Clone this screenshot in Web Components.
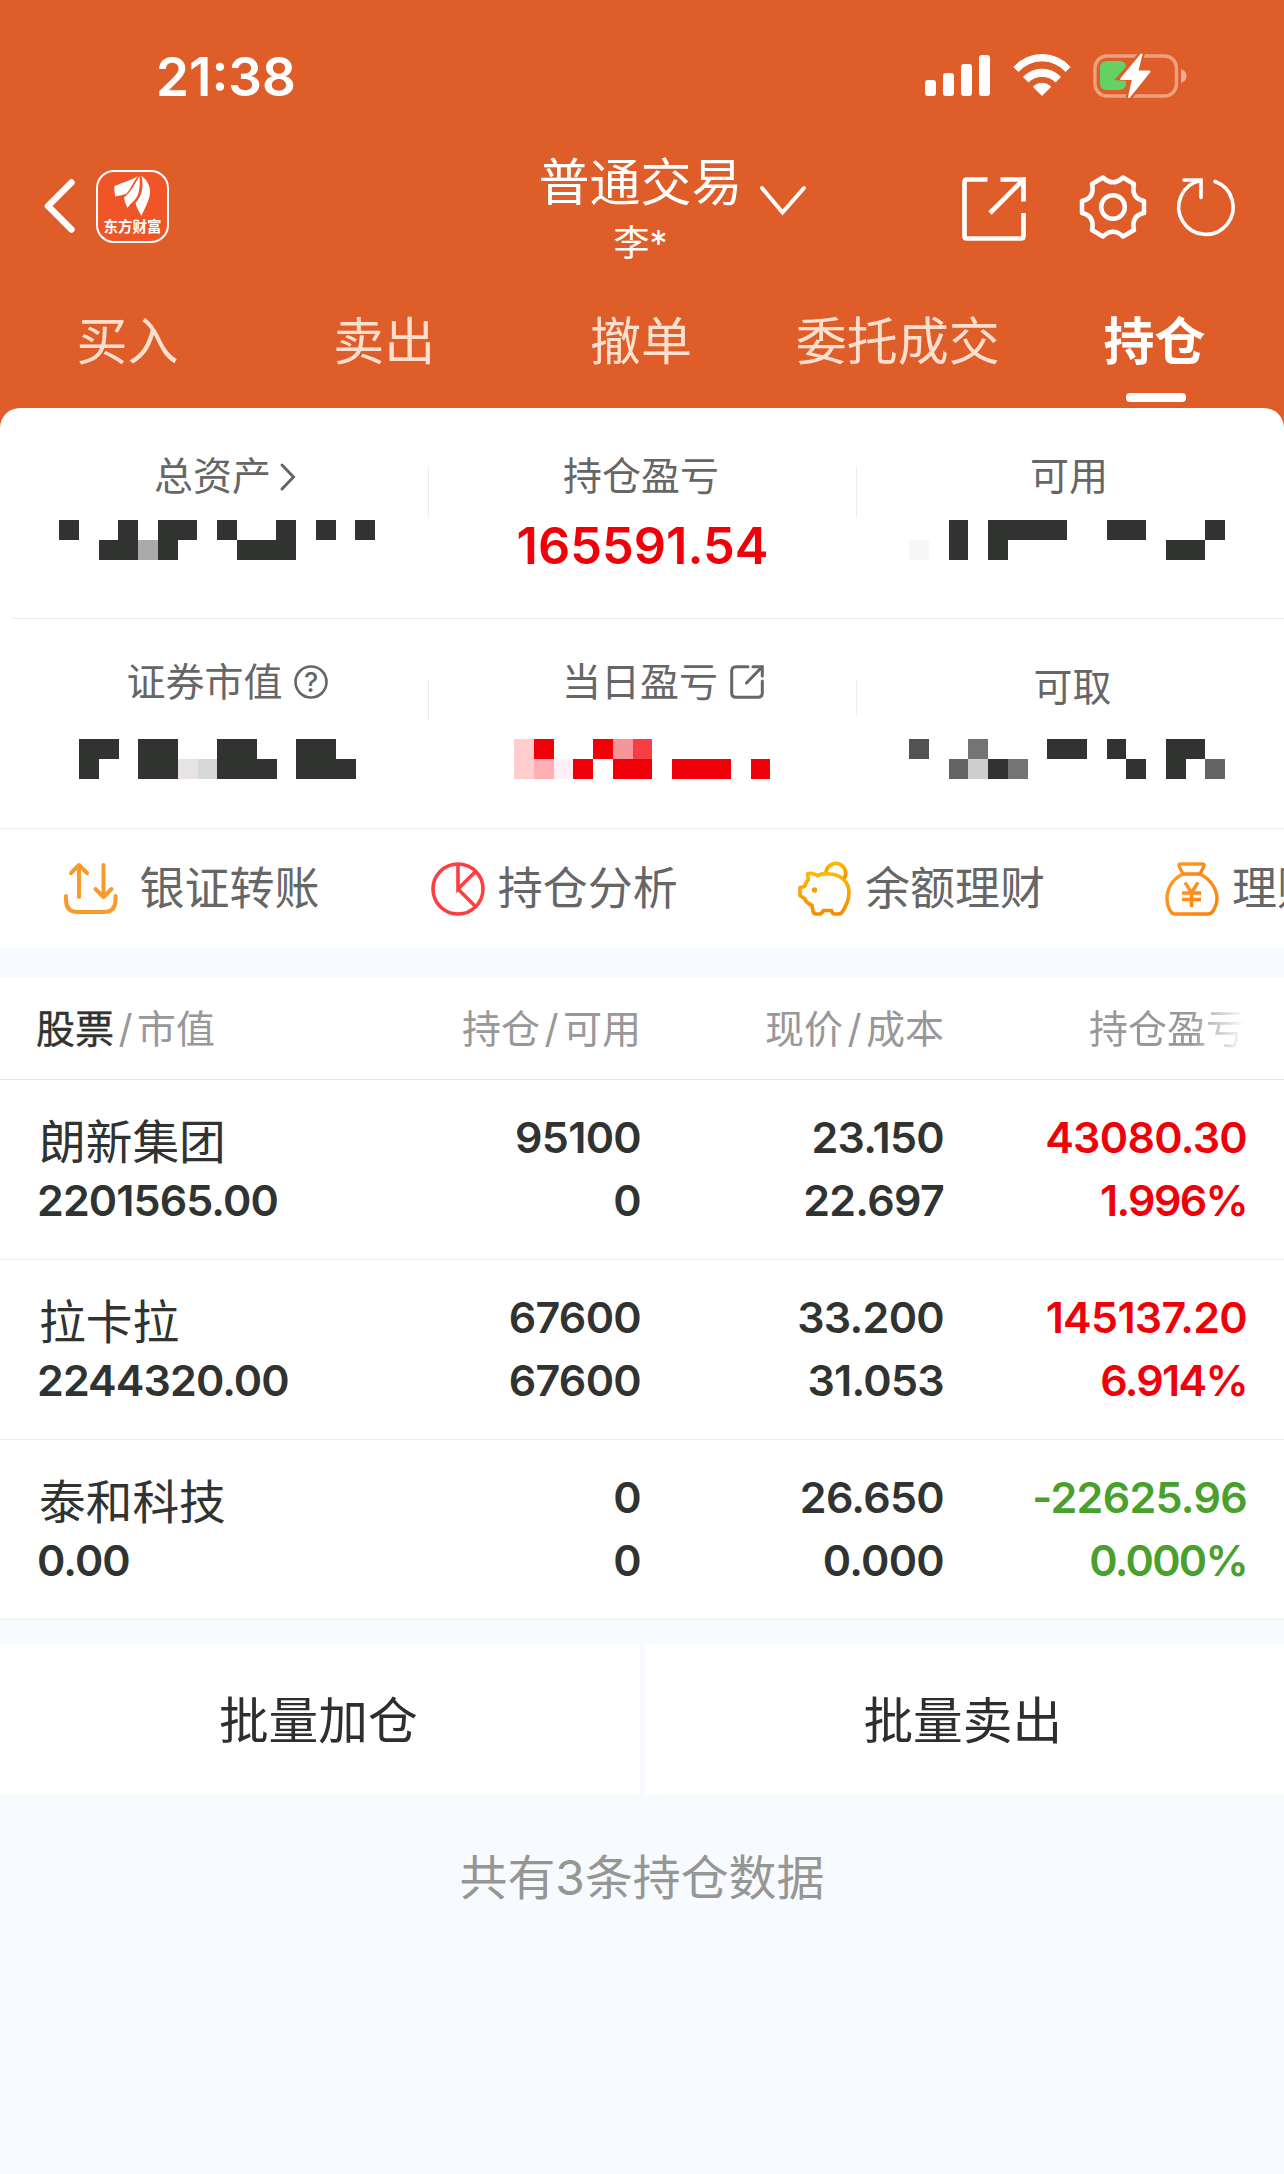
<!DOCTYPE html>
<html lang="zh-CN">
<head>
<meta charset="utf-8">
<title>持仓</title>
<style>
  html, body { margin: 0; padding: 0; }
  body {
    width: 1284px;
    min-height: 2174px;
    overflow-x: hidden;
    background: #f7faff;
    color: #313330;
    font-family: Inter, "Noto Sans CJK SC", sans-serif;
  }
</style>
</head>
<body>
<trade-page></trade-page>

<script>
(function (window) {

  const ICONS = {
    signal: [65, 41, `<g fill="#fff"><rect y="25" width="11" height="16" rx="3"/><rect x="18" y="18" width="11" height="23" rx="3"/><rect x="36" y="9" width="11" height="32" rx="3"/><rect x="54" width="11" height="41" rx="3"/></g>`],
    wifi: [58, 43, `<g fill="#fff" stroke="#fff" stroke-linejoin="round"><path d="M.8 13A38 38 0 0 1 57.2 13L52.5 17.6A31 31 0 0 0 5.5 17.6Z"/><path d="M10.5 22.9A26 26 0 0 1 47.5 22.9L42.5 28A19 19 0 0 0 15.5 28Z"/><path d="M20.3 32.8A12.5 12.5 0 0 1 37.7 32.8L29 41.4Z"/></g>`],
    battery: [94, 46, `<rect x="2" y="3" width="81.5" height="40" rx="12" fill="none" stroke="#fff" stroke-opacity=".42" stroke-width="3.4"/><path d="M88 16q5.5 2 5.5 7t-5.5 7z" fill="#fff" fill-opacity=".5"/><rect x="7" y="8" width="26" height="29" rx="6" fill="#64d165"/><path d="M48.8.7L44.7 18 57 19.5 35.7 44.7 39.8 25.5 27.5 24.5Z" fill="#df5d29" stroke="#df5d29" stroke-width="6"/><path d="M48.5 1.5L44.2 18.5H56.5L36 44 40 26H28.2Z" fill="#fff" stroke="#fff" stroke-width="2" stroke-linejoin="round"/>`],
    back: [32, 54, `<path d="M27.5 3.5L4 27 27.5 50.5" fill="none" stroke="#fff" stroke-width="6.5" stroke-linecap="round" stroke-linejoin="round"/>`],
    leaves: [40, 42, `<g fill="#fff"><path d="M25 1C17 6 8 8 1.500 11C1 15 1.500 18 2.500 21.500C7 20 10 20.500 13.500 18.500C18 14 20 7 25 1Z"/><path d="M26.500 1C22 8 19 16 11 22.500C11.500 26 12.500 29 14.500 33C18 27 23 26 25.500 18C27 12 27 6 26.500 1Z"/><path d="M28.500 1C30.500 11 30 20 22.500 28C23.500 32 26 37 28.500 41C31 34 37 25 37 17C37 9 33 4 28.500 1Z"/></g>`],
    down: [46, 30, `<path d="M2 2L22.500 26.500 44 2" fill="none" stroke="#fff" stroke-width="4" stroke-linecap="round"/>`],
    share: [64, 64, `<path d="M25.500 2.500H5Q2.500 2.500 2.500 5V59Q2.500 61.500 5 61.500H59Q61.500 61.500 61.500 59V36M38.500 2.500H61.500V24.500M61 3L28 36" fill="none" stroke="#fff" stroke-width="4.700"/>`],
    gear: [66, 64, `<path d="M23 2.500Q33 12 43 2.500L54 9C52 18 55 24 64 26V38C55 40 52 46 54 55L43 61.500Q33 52 23 61.500L12 55C14 46 11 40 2 38V26C11 24 14 18 12 9Z" fill="none" stroke="#fff" stroke-width="4.500" stroke-linejoin="round"/><circle cx="33" cy="32" r="11.800" fill="none" stroke="#fff" stroke-width="4.500"/>`],
    refresh: [58, 60, `<path d="M35 4.500A27.200 27.200 0 1 1 20.500 3.500M4 3H21V20.500" fill="none" stroke="#fff" stroke-width="3.600" stroke-linecap="round"/>`],
    more: [16, 28, `<path d="M2 2L13.500 14 2 26" fill="none" stroke="#666" stroke-width="3" stroke-linecap="round"/>`],
    help: [34, 34, `<circle cx="17" cy="17" r="15.500" fill="none" stroke="#666" stroke-width="2.600"/><text x="17" y="26.500" text-anchor="middle" font-family="Inter, sans-serif" font-size="27" font-weight="500" fill="#666">?</text>`],
    link: [34, 34, `<path d="M18 1.700H6Q1.700 1.700 1.700 6V28Q1.700 32.300 6 32.300H28Q32.300 32.300 32.300 28V16M23 1.700H32.300V11M32 2L16.500 18" fill="none" stroke="#666" stroke-width="3" stroke-linecap="round"/>`],
    transfer: [55, 54, `<path d="M16 35V3M8 11L16 3 24 11M40.500 3V35M32.500 27L40.500 35 48.500 27M3 34V38Q3 50 15 50H40.500Q52.500 50 52.500 38V34" fill="none" stroke="#f99b2b" stroke-width="4" stroke-linecap="round" stroke-linejoin="round"/>`],
    pie: [54, 54, `<g fill="none" stroke="#ff3e42" stroke-width="3.600"><circle cx="27" cy="27" r="25"/><path d="M27 2V27L44.500 9.500M27 27L44.500 44.500"/></g>`],
    pig: [54, 54, `<defs><linearGradient id="g" x1="0" y1="0" x2="0" y2="1"><stop stop-color="#ffb800"/><stop offset="1" stop-color="#f98b00"/></linearGradient></defs><g fill="none" stroke="url(#g)" stroke-width="3.700" stroke-linejoin="round" stroke-linecap="round"><path d="M28 11.500A9.800 9.800 0 1 1 46 16.500"/><path d="M9.500 12Q14 10 19.500 13.500Q25 11 32 12C43 12.500 51 20 51 30.500C51 40 47 46 43.500 51Q42.500 52 40 52H36.500Q34.500 52 33.500 48.500H25.500Q23.500 52 21.500 52H18.500Q15.500 52 15 49L14 43.500Q8 40.500 6.500 36.500L2 33.500V25.500L6.500 24.500Q8 19.500 10.500 17.500Z"/></g><circle cx="16.500" cy="28" r="2.700" fill="#f99a00"/>`],
    bag: [54, 54, `<defs><linearGradient id="g" x1="0" y1="0" x2="1" y2="1"><stop stop-color="#ff9a2c"/><stop offset="1" stop-color="#ff7f0a"/></linearGradient></defs><g fill="none" stroke="url(#g)" stroke-width="3.400" stroke-linejoin="round"><path d="M18 12L14 4Q13.500 2 15.500 2H37.500Q39.500 2 39 4L35 12Z"/><path d="M18 12C7 17 2 27 2 36.500C2 43 3.500 46 5.500 49Q7 52 10 52H43Q46 52 48 49C50.500 45 52 42 52 36C51.500 26 45 17 35 12"/><path d="M20 20.500L26.500 30.500 33 20.500M26.500 30.500V45M17 31H36M17 37.500H36"/></g>`]
  };

  // Every component gets an open root filled from its own template
  function define(name, css, html) {
    const template = document.createElement('template');
    template.innerHTML = `<style>:host { display: block; box-sizing: border-box; } * { box-sizing: border-box; } ${css}</style>${html}`;
    window.customElements.define(name, class extends HTMLElement {
      connectedCallback() {
        if (this.shadowRoot) { return; }
        this.attachShadow({ mode: 'open' });
        this.shadowRoot.appendChild(document.importNode(template.content, true));
      }
    });
  }

  window.customElements.define('trade-icon', class TradeIcon extends HTMLElement {
    connectedCallback() {
      if (this.shadowRoot) { return; }
      const [w, h, body] = ICONS[this.getAttribute('name')];
      this.attachShadow({ mode: 'open' });
      this.shadowRoot.innerHTML = `
        <style>
          :host { display: block; flex: none; width: ${w}px; height: ${h}px; }
          svg { display: block; overflow: visible; }
        </style>
        <svg width="${w}" height="${h}" viewBox="0 0 ${w} ${h}">${body}</svg>`;
    }
  });

  // Hides an amount behind blocks: one letter per block, "." is empty
  const SHADES = {
    '#': '#313330', a: '#aba9ac', b: '#f7f7f7', c: '#e6e2e6', d: '#d6d7d7', e: '#525252', f: '#636562',
    g: '#737572', h: '#cecece', R: '#f00008', s: '#ffcdcd', t: '#ffb0b4', u: '#fff0f5', v: '#f8959b', w: '#f93d44'
  };

  window.customElements.define('masked-amount', class MaskedAmount extends HTMLElement {
    connectedCallback() {
      if (this.shadowRoot) { return; }
      const rows = this.getAttribute('rows').split('|');
      const cells = rows.map((row, y) => [...row].map((c, x) => c === '.' ? '' :
        `<rect x="${x}" y="${y}" width="1" height="1" fill="${SHADES[c]}"/>`).join('')).join('');
      const cols = rows[0].length;
      const width = cols * 1284 / 65;
      this.attachShadow({ mode: 'open' });
      this.shadowRoot.innerHTML = `
        <style>
          :host { display: block; width: ${width}px; height: 40px; }
          svg { display: block; }
        </style>
        <svg width="${width}" height="40" viewBox="0 0 ${cols} 2" preserveAspectRatio="none" shape-rendering="crispEdges">${cells}</svg>`;
    }
  });

  define('status-bar', `
    :host { display: flex; align-items: flex-start; height: 150px; padding: 53px 97px 0 156px; }
    .time { font-size: 53px; line-height: 48px; font-weight: 600; margin-right: auto; }
    trade-icon { margin-top: 1px; }
    .signal { margin: 2px 23px 0 0; }
    .battery { margin: 0 0 0 22px; }
  `, `
    <span class="time">21:38</span>
    <trade-icon class="signal" name="signal"></trade-icon>
    <trade-icon name="wifi"></trade-icon>
    <trade-icon class="battery" name="battery"></trade-icon>
  `);

  define('nav-header', `
    :host { display: grid; grid-template-columns: 1fr auto 1fr; height: 137px; padding: 0 47px 0 44px; }
    .left { display: flex; align-items: flex-start; padding-top: 20px; gap: 20px; }
    .back { margin-top: 9px; }
    .logo { width: 73px; height: 73px; border: 2px solid #fff; border-radius: 18px; background: #ef5527; display: flex; flex-direction: column; align-items: center; padding-top: 3px; }
    .logo span { font-size: 14.500px; line-height: 18px; font-weight: 700; margin-top: 1px; white-space: nowrap; }
    .title { text-align: center; }
    .name { display: grid; grid-template-columns: 64px auto 64px; font-size: 51px; line-height: 66px; white-space: nowrap; }
    .name span { grid-column: 2; }
    .name trade-icon { margin: 36px 0 0 17px; }
    .user { font-size: 36px; line-height: 46px; margin-top: 4px; }
    .right { display: flex; justify-content: flex-end; align-items: flex-start; padding-top: 27px; }
    .gear { margin: -2px 34px 0 54px; }
  `, `
    <div class="left">
      <trade-icon class="back" name="back"></trade-icon>
      <div class="logo"><trade-icon name="leaves"></trade-icon><span>东方财富</span></div>
    </div>
    <div class="title">
      <div class="name"><span>普通交易</span><trade-icon name="down"></trade-icon></div>
      <div class="user">李*</div>
    </div>
    <div class="right">
      <trade-icon name="share"></trade-icon>
      <trade-icon class="gear" name="gear"></trade-icon>
      <trade-icon name="refresh" style="margin-right: -1px"></trade-icon>
    </div>
  `);

  define('nav-tab', `
    :host { flex: 1; display: flex; flex-direction: column; align-items: center; font-size: 51px; line-height: 60px; color: #fadfcf; white-space: nowrap; }
    slot { display: block; margin-left: -2px; }
    :host([active]) { color: #fff; font-weight: 600; }
    :host([active])::after { content: ""; width: 60px; height: 9px; margin-top: 21px; border-radius: 4px; background: #fff; }
  `, `<slot></slot>`);

  define('nav-tabs', `:host { display: flex; height: 121px; padding-top: 25px; }`, `
    <nav-tab>买入</nav-tab><nav-tab>卖出</nav-tab><nav-tab>撤单</nav-tab><nav-tab>委托成交</nav-tab><nav-tab active>持仓</nav-tab>
  `);

  define('summary-cell', `
    :host { display: flex; flex-direction: column; padding-top: var(--top, 45px); }
    .label { display: flex; align-items: center; justify-content: center; height: 46px; margin-left: var(--shift, -2px); font-size: 39px; line-height: 46px; color: #666; white-space: nowrap; }
    .value { margin-top: var(--gap, 21px); }
  `, `
    <div class="label"><slot name="label"></slot></div>
    <div class="value"><slot></slot></div>
  `);

  define('account-summary', `
    :host { background: #fff; border-radius: 20px 20px 0 0; }
    .row { display: grid; grid-template-columns: repeat(3, 1fr); height: 210px; }
    .rule { height: 1px; margin-left: 12px; background: #ebebeb; }
    .day { height: 209px; --bar: 42px; }
    .day + .rule { margin-left: 0; }
    summary-cell + summary-cell { background: linear-gradient(#ebebeb, #ebebeb) no-repeat 0 60px / 1px var(--bar, 48px); }
    .profit { text-align: center; font-size: 50.500px; line-height: 50px; font-weight: 600; color: #f00008; margin-top: 1px; padding-left: 1px; }
  `, `
    <div class="row">
      <summary-cell style="--shift: 22px">
        <span slot="label">总资产</span><trade-icon slot="label" name="more" style="margin: 2px 0 0 9px"></trade-icon>
        <masked-amount style="margin-left: 59.300px" rows="#..#.##.#..#.#.#|..##a#...###...."></masked-amount>
      </summary-cell>
      <summary-cell>
        <span slot="label">持仓盈亏</span>
        <div class="profit">165591.54</div>
      </summary-cell>
      <summary-cell>
        <span slot="label">可用</span>
        <masked-amount style="margin-left: 52.700px" rows="..#.####..##...#|b.#.#........##."></masked-amount>
      </summary-cell>
    </div>
    <div class="rule"></div>
    <div class="row day">
      <summary-cell style="--top: 40px; --shift: 26px; --gap: 34px">
        <span slot="label">证券市值</span><trade-icon slot="label" name="help" style="margin-left: 11px"></trade-icon>
        <masked-amount style="margin-left: 79px" rows="##.##..##..##.|#..##cd###.###"></masked-amount>
      </summary-cell>
      <summary-cell style="--top: 40px; --shift: 42px; --gap: 34px">
        <span slot="label">当日盈亏</span><trade-icon slot="label" name="link" style="margin-left: 12px"></trade-icon>
        <masked-amount style="margin-left: 85.600px" rows="sR..Rvw......|stuR.RR.RRR.R"></masked-amount>
      </summary-cell>
      <summary-cell style="--top: 45px; --shift: 5px; --gap: 29px; --bar: 36px">
        <span slot="label">可取</span>
        <masked-amount style="margin-left: 52.700px" rows="e..g...##.#..##.|..fh#g.....#.#.f"></masked-amount>
      </summary-cell>
    </div>
    <div class="rule"></div>
  `);

  define('shortcut-item', `
    :host { display: flex; flex: none; align-items: center; width: 367.200px; font-size: 45px; line-height: 54px; color: #666; white-space: nowrap; }
    ::slotted(trade-icon) { margin-right: 13px; }
  `, `<slot></slot>`);

  define('shortcut-bar', `
    :host { display: flex; height: 119px; padding: 0 0 0 63.500px; background: #fff; overflow: hidden; }
  `, `
    <shortcut-item><trade-icon name="transfer" style="margin: 0 22px 0 -1px"></trade-icon>银证转账</shortcut-item>
    <shortcut-item><trade-icon name="pie"></trade-icon>持仓分析</shortcut-item>
    <shortcut-item><trade-icon name="pig"></trade-icon>余额理财</shortcut-item>
    <shortcut-item><trade-icon name="bag"></trade-icon>理财</shortcut-item>
  `);

  define('holding-head', `
    :host {
      display: grid; grid-template-columns: 300px 304px 303px 1fr; height: 103px; padding: 0 37px 4px; align-items: center;
      background: #fff; border-bottom: 1px solid #e6e6e6; font-size: 39px; color: #999799; white-space: nowrap; margin-top: 29px;
    }
    span { text-align: right; }
    span:first-of-type { text-align: left; margin-left: -1px; }
    b { font-weight: 400; color: #313330; -webkit-text-stroke: .4px #313330; }
    i { display: inline-block; width: 23px; font-style: normal; text-align: center; }
    .faded { margin-right: 2px; -webkit-mask-image: linear-gradient(to left, transparent 0, #000 54px); mask-image: linear-gradient(to left, transparent 0, #000 54px); }
  `, `
    <span><b>股票</b><i>/</i>市值</span><span>持仓<i>/</i>可用</span><span>现价<i>/</i>成本</span><span class="faded">持仓盈亏</span>
  `);

  define('holding-row', `
    :host {
      display: grid; grid-template-columns: 300px 304px 303px 1fr; height: 180px; padding: 26px 37px 0; grid-auto-rows: 63px;
      background: #fff; border-bottom: 1px solid #ebebeb; font-size: 43px; line-height: 62px; font-weight: 560; letter-spacing: -.7px; white-space: nowrap; text-align: right;
    }
    .name { font-size: 46.700px; font-weight: 400; letter-spacing: 0; line-height: 72px; text-align: left; padding-left: 2px; }
    .worth { text-align: left; letter-spacing: -.9px; }
    .profit { color: #f00008; }
    .rate { letter-spacing: -1.700px; }
    :host([loss]) .profit { color: #4aa02c; }
  `, `
    <div class="name"><slot name="name"></slot></div>
    <div><slot name="held"></slot></div>
    <div><slot name="price"></slot></div>
    <div class="profit"><slot name="profit"></slot></div>
    <div class="worth"><slot name="worth"></slot></div>
    <div><slot name="usable"></slot></div>
    <div><slot name="cost"></slot></div>
    <div class="profit rate"><slot name="rate"></slot></div>
  `);

  define('holding-list', ``, `<holding-head></holding-head><div class="rows"></div>`);

  define('batch-actions', `
    :host { display: grid; grid-template-columns: 1fr 1fr; gap: 5px; margin-top: 24px; height: 151px; font-size: 49.700px; color: #2e2e2e; }
    div { display: flex; align-items: center; justify-content: center; background: #fff; padding: 0 3px 5px 0; }
  `, `<div>批量加仓</div><div>批量卖出</div>`);

  define('trade-page', `
    .top { background: #df5d29; color: #fff; }
    .sheet { background: #df5d29; }
    .total { margin-top: 53px; text-align: center; font-size: 47.900px; line-height: 60px; color: #969693; }
  `, `
    <div class="top"><status-bar></status-bar><nav-header></nav-header><nav-tabs></nav-tabs></div>
    <div class="sheet"><account-summary></account-summary></div>
    <shortcut-bar></shortcut-bar>
    <holding-list></holding-list>
    <batch-actions></batch-actions>
    <div class="total">共有3条持仓数据</div>
  `);

  const HOLDINGS = [
    { name: '朗新集团', worth: '2201565.00', held: '95100', usable: '0', price: '23.150', cost: '22.697', profit: '43080.30', rate: '1.996%' },
    { name: '拉卡拉', worth: '2244320.00', held: '67600', usable: '67600', price: '33.200', cost: '31.053', profit: '145137.20', rate: '6.914%' },
    { name: '泰和科技', worth: '0.00', held: '0', usable: '0', price: '26.650', cost: '0.000', profit: '-22625.96', rate: '0.000%' }
  ];

  const list = document.querySelector('trade-page').shadowRoot.querySelector('holding-list');
  list.shadowRoot.querySelector('.rows').innerHTML = HOLDINGS.map(item => `
    <holding-row${item.profit.startsWith('-') ? ' loss' : ''}>
      ${Object.keys(item).map(key => `<span slot="${key}">${item[key]}</span>`).join('')}
    </holding-row>`).join('');

})(window);
</script>
</body>
</html>
